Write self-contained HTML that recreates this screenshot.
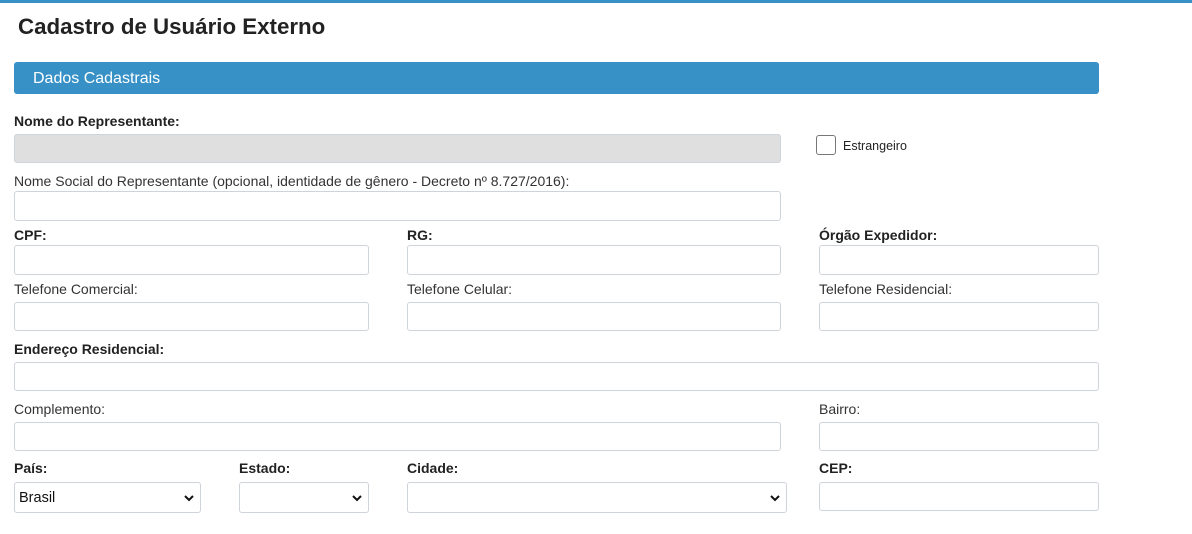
<!DOCTYPE html>
<html><head><meta charset="utf-8"><style>
body{margin:0;width:1192px;height:534px;background:#fff;font-family:"Liberation Sans",Arial,sans-serif;position:relative;overflow:hidden;color:#212529}
.a{position:absolute}
.top{left:0;top:0;width:1192px;height:3px;background:#3891c6}
h1{position:absolute;left:18px;top:14px;margin:0;font-size:22.3px;font-weight:bold;color:#222}
.hdr{left:14px;top:62px;width:1085px;height:32px;background:#3891c6;border-radius:3px;color:#fff;font-size:16px;line-height:33px;box-sizing:border-box;padding-left:19px}
.l{position:absolute;font-size:14px;color:#333;line-height:16px;margin-top:1px}
.b{font-weight:bold;color:#222}
.i{position:absolute;box-sizing:border-box;border:1px solid #ced4da;border-radius:3px;background:#fff}
.g{background:#dfdfdf}
.s{font-size:14.5px;line-height:30px;padding-left:4px;color:#111}
.chev{position:absolute;right:6px;top:11px}
</style></head><body>
<div class="a top"></div>
<h1>Cadastro de Usuário Externo</h1>
<div class="a hdr">Dados Cadastrais</div>

<div class="l b" style="left:14px;top:112px">Nome do Representante:</div>
<div class="i g" style="left:14px;top:134px;width:767px;height:29px"></div>
<div class="i" style="left:816px;top:135px;width:20px;height:20px;border:1px solid #777;border-radius:3px"></div>
<div class="l" style="left:843px;top:137px;font-size:12.5px;color:#222">Estrangeiro</div>

<div class="l" style="left:14px;top:172px">Nome Social do Representante (opcional, identidade de gênero - Decreto nº 8.727/2016):</div>
<div class="i" style="left:14px;top:191px;width:767px;height:30px"></div>

<div class="l b" style="left:14px;top:226px">CPF:</div>
<div class="l b" style="left:407px;top:226px">RG:</div>
<div class="l b" style="left:819px;top:226px">Órgão Expedidor:</div>
<div class="i" style="left:14px;top:245px;width:355px;height:30px"></div>
<div class="i" style="left:407px;top:245px;width:374px;height:30px"></div>
<div class="i" style="left:819px;top:245px;width:280px;height:30px"></div>

<div class="l" style="left:14px;top:280px">Telefone Comercial:</div>
<div class="l" style="left:407px;top:280px">Telefone Celular:</div>
<div class="l" style="left:819px;top:280px">Telefone Residencial:</div>
<div class="i" style="left:14px;top:302px;width:355px;height:29px"></div>
<div class="i" style="left:407px;top:302px;width:374px;height:29px"></div>
<div class="i" style="left:819px;top:302px;width:280px;height:29px"></div>

<div class="l b" style="left:14px;top:340px">Endereço Residencial:</div>
<div class="i" style="left:14px;top:362px;width:1085px;height:29px"></div>

<div class="l" style="left:14px;top:400px">Complemento:</div>
<div class="l" style="left:819px;top:400px">Bairro:</div>
<div class="i" style="left:14px;top:422px;width:767px;height:29px"></div>
<div class="i" style="left:819px;top:422px;width:280px;height:29px"></div>

<div class="l b" style="left:14px;top:459px">País:</div>
<div class="l b" style="left:239px;top:459px">Estado:</div>
<div class="l b" style="left:407px;top:459px">Cidade:</div>
<div class="l b" style="left:819px;top:459px">CEP:</div>
<div class="i s" style="left:14px;top:482px;width:187px;height:31px">Brasil<svg class="chev" width="10" height="8" viewBox="0 0 10 8"><path d="M1 2 L5 6 L9 2" stroke="#111" stroke-width="2" fill="none"/></svg></div>
<div class="i s" style="left:239px;top:482px;width:130px;height:31px"><svg class="chev" width="10" height="8" viewBox="0 0 10 8"><path d="M1 2 L5 6 L9 2" stroke="#111" stroke-width="2" fill="none"/></svg></div>
<div class="i s" style="left:407px;top:482px;width:380px;height:31px"><svg class="chev" width="10" height="8" viewBox="0 0 10 8"><path d="M1 2 L5 6 L9 2" stroke="#111" stroke-width="2" fill="none"/></svg></div>
<div class="i" style="left:819px;top:482px;width:280px;height:29px"></div>
</body></html>
